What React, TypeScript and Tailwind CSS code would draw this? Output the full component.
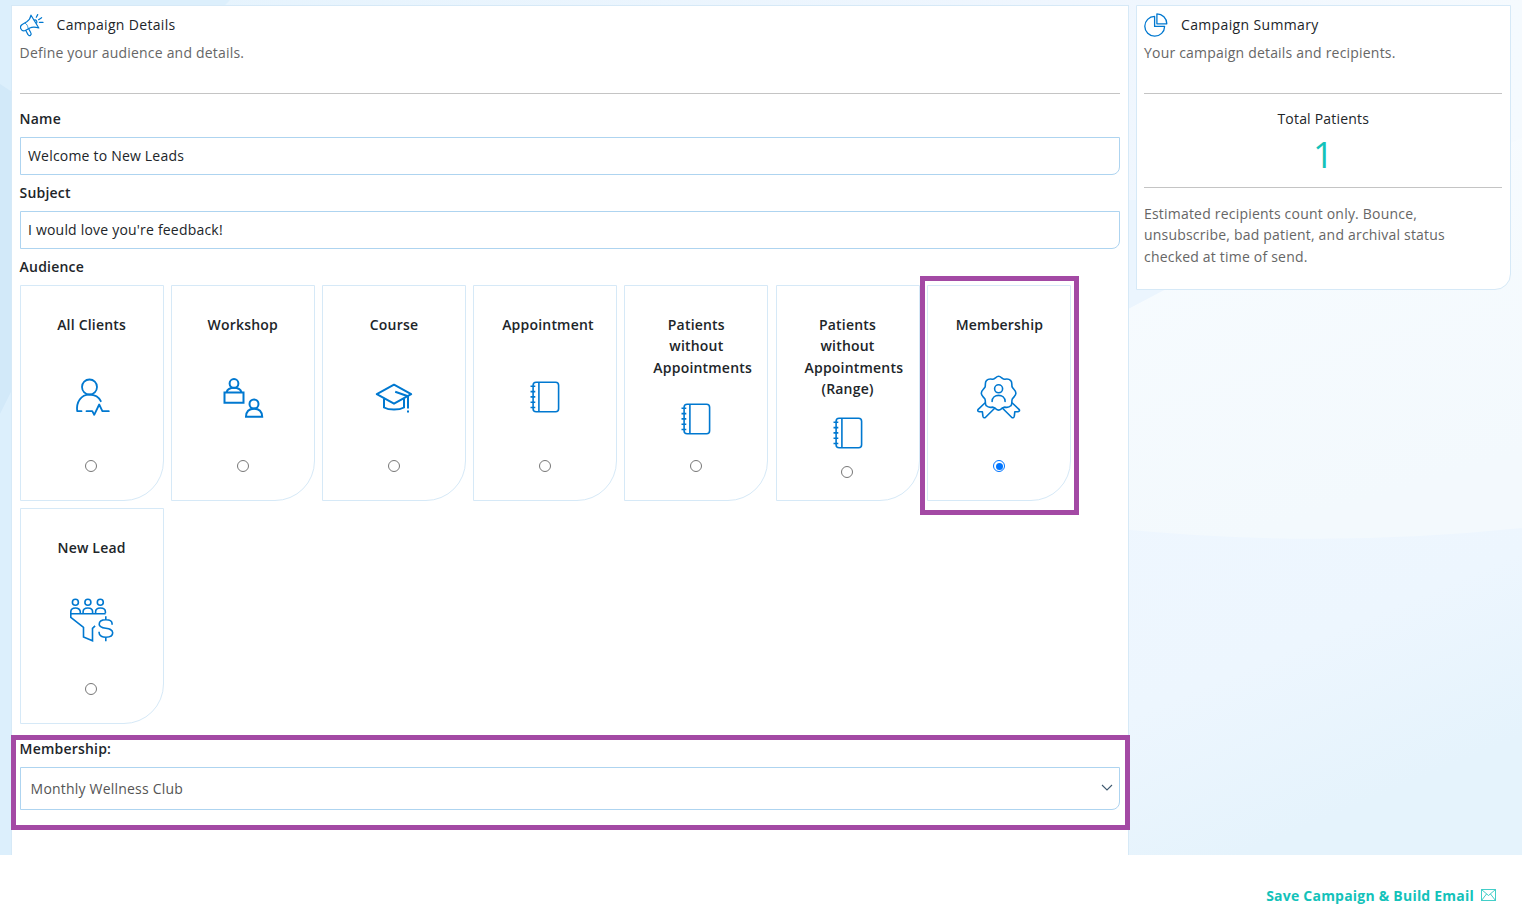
import { useState } from "react";
import type { ReactNode } from "react";

type Audience = {
  label: string;
  icon: ReactNode;
};

function MegaphoneIcon() {
  return (
    <svg width="24" height="24" viewBox="0 0 24 24" fill="none" stroke="#0078d0" strokeWidth="1.2" strokeLinecap="round" strokeLinejoin="round">
      <path d="M11 2.2 18.8 15C15.5 14 12.5 13.8 9.8 15L5.8 17.2C4 18.2 2 17.8 1 16C0 14.2 .5 12.4 2.6 11.2L6.8 8.8C9 7.3 10.5 5.3 11 2.2Z" />
      <path d="M5.8 17.5 8 21.6C8.5 22.6 9.7 23 10.5 22.3C11.4 21.6 11.3 20.6 10.8 19.8L8.8 16" />
      <path d="M5.3 10.2C6.9 11.2 7.9 13 8.1 15.2" strokeWidth="0.8" />
      <path d="M14.4 7c1.7-.5 3.2 1.7 2.2 3.2M16.3 4.3l1.4-2.7M18.6 6.7l3-2M19.4 9.3l3.6.1" />
    </svg>
  );
}

function PieIcon() {
  return (
    <svg width="24" height="24" viewBox="0 0 24 24" fill="none" stroke="#0078d0" strokeWidth="1.3" strokeLinejoin="round">
      <path d="M10.6 3.4A9.9 9.9 0 1 0 20.6 13.4H10.6Z" />
      <path d="M12.9 .9V10.8H22.8A9.9 9.9 0 0 0 12.9 .9Z" />
    </svg>
  );
}

function ClientIcon() {
  return (
    <svg className="my-[11.2px] shrink-0" width="44" height="44" viewBox="1 -1 44 44" fill="none" stroke="#0078d0" strokeWidth="1.8" strokeLinecap="round" strokeLinejoin="round">
      <circle cx="20.5" cy="11" r="7.5" />
      <path d="M12.5 35.2H8.2C7 26 12 18.6 20.5 18.6c5.4 0 9.5 2.6 11.3 6.6" />
      <path d="M17.5 35.2h5.8l1.9 3.6 5-10.3 3.2 6.7h6.4" />
    </svg>
  );
}

function WorkshopIcon() {
  return (
    <svg className="my-[11.2px] shrink-0" width="44" height="44" viewBox="0 -1 44 44" fill="none" stroke="#0078d0" strokeWidth="2">
      <circle cx="13" cy="7.5" r="4.4" />
      <path d="M5.5 16c1-2.7 3.3-4.2 7.5-4.2s6.5 1.5 7.5 4.2M3.5 16.5h19v10.2h-19Z" />
      <circle cx="33" cy="28" r="4.5" />
      <path d="M25 40.7h16.2c-.2-5-3.2-8-8.1-8s-8 3-8.1 8Z" />
    </svg>
  );
}

function CourseIcon() {
  return (
    <svg className="my-[11.2px] shrink-0" width="44" height="44" viewBox="0 -0.5 44 44" fill="none" stroke="#0078d0" strokeWidth="2">
      <path d="M22 9.2 4.8 18.7 22 28.2l17.2-9.5Z" strokeLinejoin="round" />
      <path d="M12 23.2V32c5 2.8 15 2.8 20 0v-8.8" />
      <path d="M23.2 16.3 36 20.7V33M35 36h2" />
    </svg>
  );
}

function NotebookIcon() {
  return (
    <svg className="my-[11.2px] shrink-0" width="44" height="44" viewBox="0.3 0 44 44" fill="none" stroke="#0078d0" strokeWidth="1.6">
      <rect x="10.4" y="7.3" width="25.5" height="29.5" rx="3" />
      <path d="M16.2 7.3V36.8" />
      <path d="M7.8 11.3h4.8M7.8 16.6h4.8M7.8 21.9h4.8M7.8 27.2h4.8M7.8 32.5h4.8" />
    </svg>
  );
}

function MembershipIcon() {
  return (
    <svg className="my-[11.2px] shrink-0" width="44" height="44" viewBox="0.4 0 44 44" overflow="visible" fill="none" stroke="#0078d0" strokeWidth="1.6" strokeLinecap="round" strokeLinejoin="round">
      <path d="M22 1.3C24.5 1.3 25.7 4.3 28.2 4.3C30.6 3.7 32.7 4.1 34.2 5.6C36 7.3 34.7 9.8 35.6 12.2C36.8 14.4 39.3 15.5 39.3 18.2C39.3 20.9 36.8 22 35.6 24.2C34.7 26.6 36 29.1 34.2 30.8C32.7 32.3 30.6 32.7 28.2 32.1C25.7 32.1 24.5 35.1 22 35.1C19.5 35.1 18.3 32.1 15.8 32.1C13.4 32.7 11.3 32.3 9.8 30.8C8 29.1 9.3 26.6 8.4 24.2C7.2 22 4.7 20.9 4.7 18.2C4.7 15.5 7.2 14.4 8.4 12.2C9.3 9.8 8 7.3 9.8 5.6C11.3 4.1 13.4 3.7 15.8 4.3C18.3 4.3 19.5 1.3 22 1.3Z" />
      <circle cx="22" cy="13.8" r="4" />
      <path d="M15.5 26.5c0-8.200 13-8.200 13 0" />
      <path d="M8.3 28 1.6 34.3c-1 1.4-.4 2.1 1 2.3l3.2.2.5 4.4c.4 1.8 1.7 2 2.7 1L18.3 33" />
      <path d="m35.7 28 6.700 6.300c1 1.400.4 2.100-1 2.300l-3.200.2-.5 4.400c-.4 1.800-1.700 2-2.700 1L25.700 33" />
    </svg>
  );
}

function LeadIcon() {
  return (
    <svg className="my-[11.2px] shrink-0" width="44" height="44" viewBox="0.4 -0.3 44 44" overflow="visible" fill="none" stroke="#0078d0" strokeWidth="1.6">
      <circle cx="5.8" cy="4" r="3" />
      <circle cx="18.3" cy="4" r="3" />
      <circle cx="30.7" cy="4" r="3" />
      <path d="M1.2 15v-1.5c0-5 9.5-5 9.5 0V15M13.5 15v-1.5c0-5 9.5-5 9.5 0V15M26 15v-1.5c0-5 9.8-5 9.8 0V15" />
      <path d="M.5 15.5h35.5M1.2 15v4l12.7 10v9.7l9 3.7V30l2.6-2.5" />
      <path d="M42.5 26.5v-1c0-3-3-4-6.2-4s-6.7 1-6.7 4.4c0 6.2 13.5 2 13.5 8.6 0 3.2-3.3 4.4-6.7 4.4s-6.9-1-6.9-4.4v-1M36.2 18v3.500M36.200 39v4" />
    </svg>
  );
}

const audiences: Audience[] = [
  { label: "All Clients", icon: <ClientIcon /> },
  { label: "Workshop", icon: <WorkshopIcon /> },
  { label: "Course", icon: <CourseIcon /> },
  { label: "Appointment", icon: <NotebookIcon /> },
  { label: "Patients without Appointments", icon: <NotebookIcon /> },
  { label: "Patients without Appointments (Range)", icon: <NotebookIcon /> },
  { label: "Membership", icon: <MembershipIcon /> },
  { label: "New Lead", icon: <LeadIcon /> },
];

type AudienceCardProps = {
  audience: Audience;
  checked: boolean;
  onSelect: () => void;
};

function AudienceCard({ audience, checked, onSelect }: AudienceCardProps) {
  return (
    <label className="relative flex h-[216px] w-36 flex-col items-center justify-between rounded-br-[40px] border border-[#d6e9f7] px-7 py-7">
      <span className="block w-[86px] text-center font-semibold text-[#212529]">
        {audience.label}
      </span>
      {audience.icon}
      <input
        type="radio"
        name="audience"
        checked={checked}
        onChange={onSelect}
        className="m-0 mr-[0.4px] size-3 shrink-0 appearance-none rounded-full border border-[#777] bg-clip-content p-[1.5px] checked:border-[#0075ff] checked:bg-[#0075ff]"
      />
      {checked && (
        <span className="pointer-events-none absolute -top-[10px] -left-[8px] h-[239px] w-[159px] border-[5px] border-[#a349a4]" />
      )}
    </label>
  );
}

function PageBackground() {
  return (
    <svg className="absolute inset-0" width="1522" height="855" viewBox="0 0 1522 855" preserveAspectRatio="none">
      <defs>
        <linearGradient id="top" x1="0" y1="0" x2="1" y2="0">
          <stop offset="0" stopColor="#e4f3fd" />
          <stop offset="0.7" stopColor="#eff6fe" />
          <stop offset="1" stopColor="#f5fafe" />
        </linearGradient>
        <linearGradient id="lower" x1="0" y1="0" x2="0.3" y2="1">
          <stop offset="0" stopColor="#f0f7ff" />
          <stop offset="0.7" stopColor="#edf6fe" />
          <stop offset="1" stopColor="#e5f3fc" />
        </linearGradient>
        <linearGradient id="upper" x1="0" y1="0" x2="0.3" y2="1">
          <stop offset="0" stopColor="#f8fcff" />
          <stop offset="1" stopColor="#f3f9fd" />
        </linearGradient>
      </defs>
      <rect width="1522" height="310" fill="url(#top)" />
      <rect x="1120" y="290" width="402" height="565" fill="url(#lower)" />
      <path d="M1120 313 1164 290 1522 138V528Q1320 549 1120 529Z" fill="url(#upper)" />
      <path d="M1120 200H1140V298L1120 310Z" fill="#ebf5fe" />
      <path d="M1128 280H1164V290L1128 309Z" fill="#ebf5fe" />
      <path d="M0 0H230L220 10H12V860H0Z" fill="#dceffc" />
      <path d="M0 84 12 92V390L0 414Z" fill="#d2e9f9" />
    </svg>
  );
}

export default function App() {
  const [selected, setSelected] = useState("Membership");
  const [name, setName] = useState("Welcome to New Leads");
  const [subject, setSubject] = useState("I would love you're feedback!");

  return (
    <div className="h-[923px] w-[1522px] overflow-hidden bg-white font-['Open_Sans',sans-serif] text-[14px] leading-[21.5px] tracking-[0.2px] text-[#212529]">
      <div className="relative h-[855px] overflow-hidden">
        <PageBackground />

        <div className="relative flex items-start gap-[7px] pt-[5px] pl-[10.6px]">
          {/* Details */}
          <main className="h-[860px] w-[1118px] shrink-0 border border-[#d6e9f7] bg-white px-2 pt-[7px]">
            <div className="flex h-6 items-center gap-[13px]">
              <MegaphoneIcon />
              <h1 className="tracking-[0.32px]">Campaign Details</h1>
            </div>
            <p className="mt-[5px] text-[#666]">Define your audience and details.</p>
            <hr className="mt-[29px] border-[#c4c4c4]" />

            <label className="mt-[14px] block leading-[21px] font-semibold">
              Name
              <input
                value={name}
                onChange={(e) => setName(e.target.value)}
                className="mt-2 block h-[38px] w-full rounded-br-[8px] border border-[#aed4f0] px-[7.4px] font-normal outline-none"
              />
            </label>
            <label className="mt-[7px] block leading-[21px] font-semibold">
              Subject
              <input
                value={subject}
                onChange={(e) => setSubject(e.target.value)}
                className="mt-2 block h-[38px] w-full rounded-br-[8px] border border-[#aed4f0] px-[7.4px] font-normal outline-none"
              />
            </label>

            <p className="mt-[7px] font-semibold">Audience</p>
            <div className="mt-[7.7px] flex flex-wrap gap-x-[7.2px] gap-y-[7px]">
              {audiences.map((audience) => (
                <AudienceCard
                  key={audience.label}
                  audience={audience}
                  checked={selected === audience.label}
                  onSelect={() => setSelected(audience.label)}
                />
              ))}
            </div>

            {/* Membership */}
            <div className="relative -mx-[9px] mt-[11.3px] h-[95px] w-[1119px] border-[5px] border-[#a349a4] px-1">
              <p className="-mt-[2px] font-semibold">Membership:</p>
              <button className="mt-[7.3px] flex h-[43px] w-[1100px] items-center justify-between rounded-br-[8px] border border-[#aed4f0] pr-[6px] pl-[10px] text-[#555]">
                <span className="pt-[0.5px]">Monthly Wellness Club</span>
                <svg width="12" height="8" viewBox="0 0 12 8" fill="none" stroke="#405a70" strokeWidth="1.1">
                  <path d="m1 1 5 5 5-5" />
                </svg>
              </button>
            </div>
          </main>

          {/* Summary */}
          <aside className="h-[285px] w-[375px] shrink-0 rounded-br-[16px] border border-[#d6e9f7] bg-white pt-[7px] pr-2 pl-[7.4px]">
            <div className="flex h-6 items-center gap-[13px]">
              <PieIcon />
              <h2 className="tracking-[0.36px]">Campaign Summary</h2>
            </div>
            <p className="mt-[5px] text-[#666]">Your campaign details and recipients.</p>
            <hr className="mt-[29px] border-[#c4c4c4]" />
            <div className="mt-[14px] pl-px text-center">
              <p>Total Patients</p>
              <p className="text-[36px] leading-[51px] text-[#13c2ba]">1</p>
            </div>
            <hr className="mt-[7px] border-[#c4c4c4]" />
            <p className="mt-[14.8px] w-[320px] text-[#666]">
              Estimated recipients count only. Bounce, unsubscribe, bad patient, and archival status checked at time of send.
            </p>
          </aside>
        </div>
      </div>

      {/* Footer */}
      <footer className="flex h-[68px] items-center justify-end bg-white pt-[14px] pr-[26.5px]">
        <button className="flex items-center gap-[6.5px] font-bold tracking-[0.22px] text-[#13c2ba]">
          Save Campaign &amp; Build Email
          <svg className="-mt-[2px]" width="15" height="12" viewBox="0 0 15 12" fill="none" stroke="#13c2ba" strokeWidth="0.8">
            <path d="M.5 .5h14v11H.5ZM.5 .5l7 6 7-6M.5 11.5l5-6.5M14.5 11.5l-5-6.5" />
          </svg>
        </button>
      </footer>
    </div>
  );
}
